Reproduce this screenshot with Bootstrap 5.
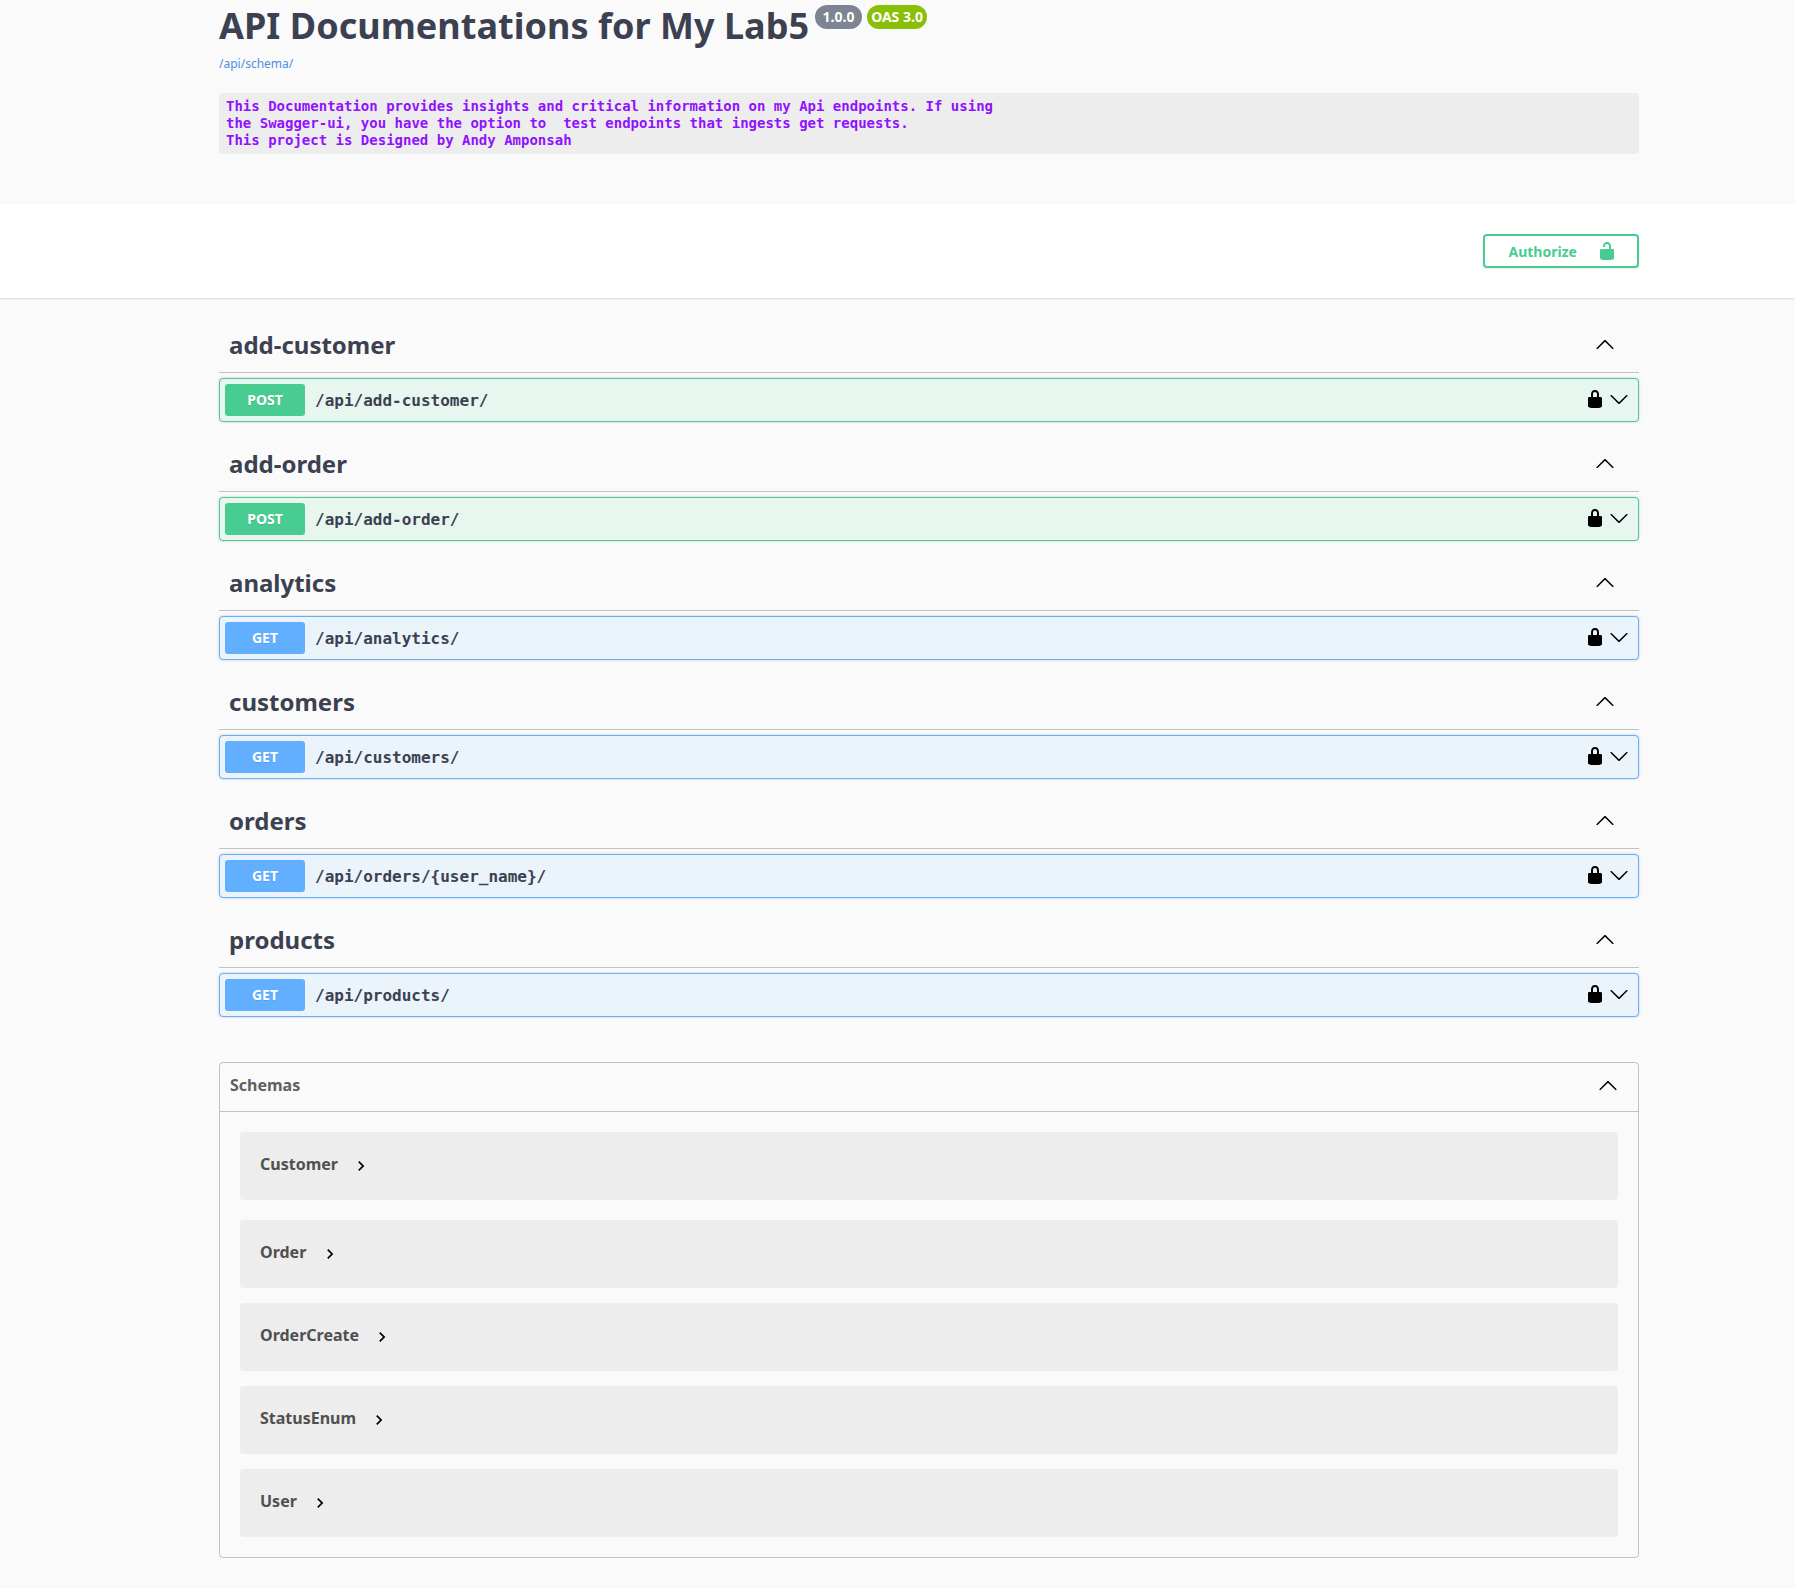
<!DOCTYPE html>
<html lang="en">
<head>
<meta charset="utf-8">
<title>API Documentations for My Lab5</title>
<link href="https://cdn.jsdelivr.net/npm/bootstrap@5.3.0/dist/css/bootstrap.min.css" rel="stylesheet">
<style>
body{background:#fafafa;color:#3b4151;font-family:"Noto Sans",sans-serif;font-size:14px;line-height:20px}
.wrap{width:1420px;margin-left:219px}
.info-head{height:204px}
.api-title{font-size:36px;line-height:50px;height:50px;font-weight:700;margin:0;padding-top:1px;letter-spacing:.03px}
.ver{height:24px;margin-top:5px;border-radius:57px;background:#7d8492;color:#fff;font-size:14px;font-weight:700;line-height:24px;text-align:center;width:47px;margin-left:6px}
.ver.oas{background:#89bf04;width:60px;margin-left:5px}
.schema-link{font-size:12px;line-height:16px;height:16px;color:#4990e2;margin-top:6px}
.desc{background:#ededed;border-radius:4px;color:#9012fe;font:700 14px/17px "DejaVu Sans Mono",monospace;height:61px;padding:5px 7px;margin:21px 0 0}
.scheme{height:94px;background:#fff;box-shadow:0 1px 2px 0 rgba(0,0,0,.15)}
.btn.authorize{width:156px;height:34px;border:2px solid #49cc90;border-radius:4px;color:#49cc90;font-size:14px;font-weight:700;line-height:20px;padding:0 20px 0 23.5px;box-shadow:0 1px 2px rgba(0,0,0,.1)}
.authorize span{padding-top:2px}
svg{width:20px;height:20px;display:block;flex:none;fill:currentColor}
.tags{padding-top:18px}
.tag-section{height:119px}
.tag-head{height:57px;border-bottom:1px solid rgba(59,65,81,.3);padding:0 24px 0 10px}
.tag-head h3{font-size:24px;line-height:32px;font-weight:700;margin:0;padding-top:2px}
.tag-head svg,.op svg{color:#000}
.op{height:44px;margin-top:5px;border:1px solid;border-radius:4px;box-shadow:0 0 3px rgba(0,0,0,.19);padding:0 9px 0 5px}
.op.post{border-color:#49cc90;background:#e8f6f0}
.op.get{border-color:#61affe;background:#ebf3fb}
.method{width:80px;height:32px;border-radius:3px;color:#fff;font-weight:700;line-height:32px;text-align:center;text-shadow:0 1px 0 rgba(0,0,0,.1)}
.post .method{background:#49cc90}
.get .method{background:#61affe}
.route{font:700 16px/22px "DejaVu Sans Mono",monospace;padding:2px 0 0 10px;color:#3b4151}
.op svg{margin-bottom:2px}
.op svg + svg{margin-left:4px}
.schemas{margin-top:32px;border:1px solid rgba(59,65,81,.3);border-radius:4px;height:496px}
.schemas-head{height:49px;border-bottom:1px solid rgba(59,65,81,.3);padding:0 20px 4px 10px;font-size:16px;font-weight:700;color:#606060}
.schemas-head svg{color:#000}
.model-list{padding:20px 20px 0}
.model{height:68px;margin-bottom:15px;border-radius:4px;background:#ededed;padding:20px 20px 0;font-size:16px;font-weight:700;line-height:24px;color:#505050}
.model:first-child{margin-bottom:20px}
.model svg{color:#000;margin:4px 0 0 13.4px}
</style>
<script src="https://cdn.jsdelivr.net/npm/bootstrap@5.3.0/dist/js/bootstrap.bundle.min.js"></script>
</head>
<body>
<svg class="d-none" xmlns="http://www.w3.org/2000/svg">
<symbol id="up" viewBox="0 0 20 20"><path d="M17.418 14.908c.272.268.709.268.979 0s.271-.701 0-.969l-7.908-7.83c-.27-.268-.707-.268-.979 0l-7.908 7.83c-.27.268-.27.701 0 .969.271.268.709.268.979 0L10 7.767l7.418 7.141z"/></symbol>
<symbol id="down" viewBox="0 0 20 20"><path d="M17.418 6.109c.272-.268.709-.268.979 0s.271.701 0 .969l-7.908 7.83c-.27.268-.707.268-.979 0l-7.908-7.83c-.27-.268-.27-.701 0-.969.271-.268.709-.268.979 0L10 13.25l7.418-7.141z"/></symbol>
<symbol id="locked" viewBox="0 0 20 20"><path d="M15.8 8H14V5.6C14 2.703 12.665 1 10 1 7.334 1 6 2.703 6 5.6V8H4c-.553 0-1 .646-1 1.199V17c0 .549.428 1.139.951 1.307l1.197.387C5.672 18.861 6.55 19 7.1 19h5.8c.549 0 1.428-.139 1.951-.307l1.196-.387c.524-.167.953-.757.953-1.306V9.199C17 8.646 16.352 8 15.8 8zM12 8H8V5.199C8 3.754 8.797 3 10 3c1.203 0 2 .754 2 2.199V8z"/></symbol>
<symbol id="unlocked" viewBox="0 0 20 20"><path d="M15.8 8H14V5.6C14 2.703 12.665 1 10 1 7.334 1 6 2.703 6 5.6V6h2v-.801C8 3.754 8.797 3 10 3c1.203 0 2 .754 2 2.199V8H4c-.553 0-1 .646-1 1.199V17c0 .549.428 1.139.951 1.307l1.197.387C5.672 18.861 6.55 19 7.1 19h5.8c.549 0 1.428-.139 1.951-.307l1.196-.387c.524-.167.953-.757.953-1.306V9.199C17 8.646 16.352 8 15.8 8z"/></symbol>
<symbol id="right" viewBox="0 0 24 24"><path d="M10 6L8.59 7.41 13.17 12l-4.58 4.59L10 18l6-6z"/></symbol>
</svg>

<header class="wrap info-head">
<div class="d-flex align-items-start"><h1 class="api-title">API Documentations for My Lab5</h1><span class="ver">1.0.0</span><span class="ver oas">OAS 3.0</span></div>
<a class="schema-link d-block text-decoration-none" href="#">/api/schema/</a>
<pre class="desc">This Documentation provides insights and critical information on my Api endpoints. If using
the Swagger-ui, you have the option to  test endpoints that ingests get requests.
This project is Designed by Andy Amponsah</pre>
</header>

<div class="scheme d-flex align-items-center"><div class="wrap d-flex justify-content-end">
<button class="btn authorize d-flex align-items-center justify-content-between bg-transparent" type="button"><span>Authorize</span><svg><use href="#unlocked"/></svg></button>
</div></div>

<main class="wrap tags">
<section class="tag-section">
<div class="tag-head d-flex align-items-center justify-content-between"><h3>add-customer</h3><svg><use href="#up"/></svg></div>
<div class="op post d-flex align-items-center"><span class="method">POST</span><span class="route flex-grow-1">/api/add-customer/</span><svg><use href="#locked"/></svg><svg><use href="#down"/></svg></div>
</section>
<section class="tag-section">
<div class="tag-head d-flex align-items-center justify-content-between"><h3>add-order</h3><svg><use href="#up"/></svg></div>
<div class="op post d-flex align-items-center"><span class="method">POST</span><span class="route flex-grow-1">/api/add-order/</span><svg><use href="#locked"/></svg><svg><use href="#down"/></svg></div>
</section>
<section class="tag-section">
<div class="tag-head d-flex align-items-center justify-content-between"><h3>analytics</h3><svg><use href="#up"/></svg></div>
<div class="op get d-flex align-items-center"><span class="method">GET</span><span class="route flex-grow-1">/api/analytics/</span><svg><use href="#locked"/></svg><svg><use href="#down"/></svg></div>
</section>
<section class="tag-section">
<div class="tag-head d-flex align-items-center justify-content-between"><h3>customers</h3><svg><use href="#up"/></svg></div>
<div class="op get d-flex align-items-center"><span class="method">GET</span><span class="route flex-grow-1">/api/customers/</span><svg><use href="#locked"/></svg><svg><use href="#down"/></svg></div>
</section>
<section class="tag-section">
<div class="tag-head d-flex align-items-center justify-content-between"><h3>orders</h3><svg><use href="#up"/></svg></div>
<div class="op get d-flex align-items-center"><span class="method">GET</span><span class="route flex-grow-1">/api/orders/{user_name}/</span><svg><use href="#locked"/></svg><svg><use href="#down"/></svg></div>
</section>
<section class="tag-section">
<div class="tag-head d-flex align-items-center justify-content-between"><h3>products</h3><svg><use href="#up"/></svg></div>
<div class="op get d-flex align-items-center"><span class="method">GET</span><span class="route flex-grow-1">/api/products/</span><svg><use href="#locked"/></svg><svg><use href="#down"/></svg></div>
</section>

<section class="schemas">
<div class="schemas-head d-flex align-items-center justify-content-between"><span>Schemas</span><svg><use href="#up"/></svg></div>
<div class="model-list">
<div class="model d-flex align-items-start"><span>Customer</span><svg><use href="#right"/></svg></div>
<div class="model d-flex align-items-start"><span>Order</span><svg><use href="#right"/></svg></div>
<div class="model d-flex align-items-start"><span>OrderCreate</span><svg><use href="#right"/></svg></div>
<div class="model d-flex align-items-start"><span>StatusEnum</span><svg><use href="#right"/></svg></div>
<div class="model d-flex align-items-start"><span>User</span><svg><use href="#right"/></svg></div>
</div>
</section>
</main>
</body>
</html>
